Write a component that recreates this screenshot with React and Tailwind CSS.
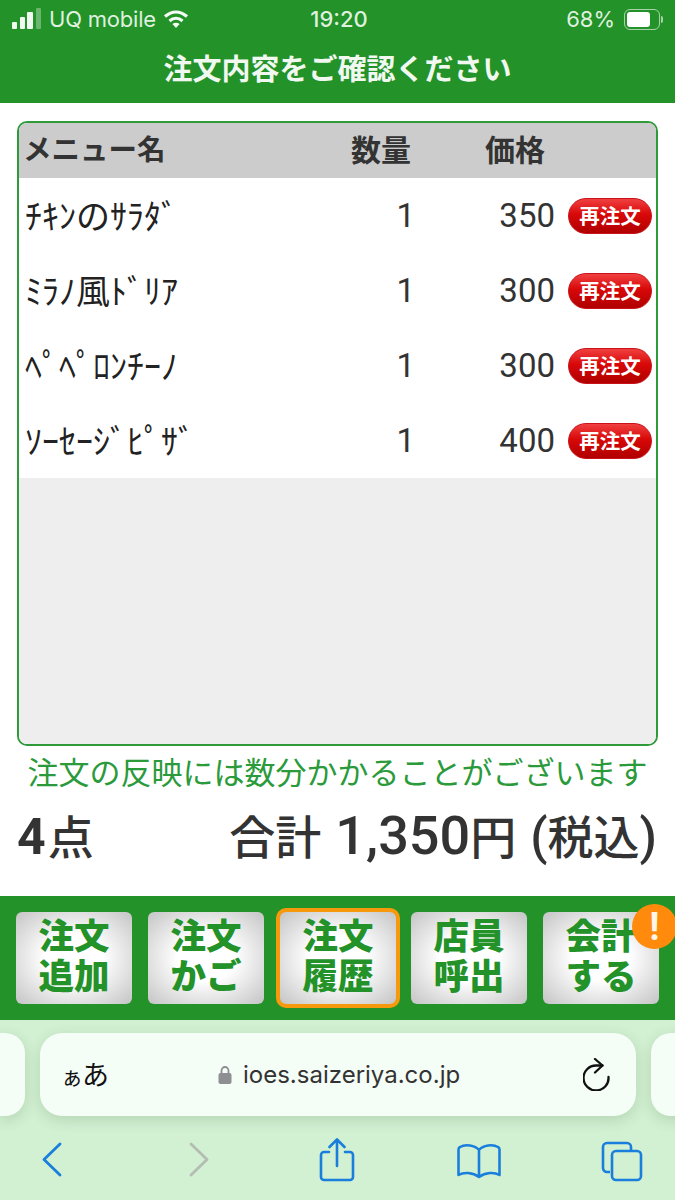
import React from 'react'

const rows = [
  { name: 'ﾁｷﾝのｻﾗﾀﾞ', qty: 1, price: 350 },
  { name: 'ﾐﾗﾉ風ﾄﾞﾘｱ', qty: 1, price: 300 },
  { name: 'ﾍﾟﾍﾟﾛﾝﾁｰﾉ', qty: 1, price: 300 },
  { name: 'ｿｰｾｰｼﾞﾋﾟｻﾞ', qty: 1, price: 400 },
]

const navButtons = [
  { top: '注文', bottom: '追加' },
  { top: '注文', bottom: 'かご' },
  { top: '注文', bottom: '履歴', active: true },
  { top: '店員', bottom: '呼出' },
  { top: '会計', bottom: 'する', alert: true },
]

const cjk = "font-['Noto_Sans_CJK_JP',sans-serif]"
const roboto = "font-['Roboto',sans-serif]"

const StatusBar = () => (
  <div className="flex h-[37px] items-center justify-between pl-3 pr-[11px] pt-px font-['Inter',sans-serif] text-[22px] text-[#dff0df]">
    <div className="flex w-[200px] items-center">
      <svg width="30" height="24" viewBox="0 0 30 24" fill="#f1f8f1">
        <rect x="0" y="15" width="5" height="7" rx="1" />
        <rect x="8" y="10" width="5" height="12" rx="1" />
        <rect x="15" y="5" width="6" height="17" rx="1" />
        <rect x="24" y="1" width="5" height="21" rx="1" opacity="0.35" />
      </svg>
      <span className="ml-[7px] tracking-[-0.2px]">UQ mobile</span>
      <svg className="ml-[7px]" width="26" height="20" viewBox="0 0 26 20" fill="none" stroke="#f4faf4" strokeWidth="3.2">
        <path d="M2 7.5C9 1.5 17 1.5 24 7.5" />
        <path d="M6.5 12C10.5 8.5 15.5 8.5 19.5 12" />
        <path d="M13 19l-3.6-4c2.2-1.600 5-1.600 7.200 0z" fill="#f4faf4" stroke="none" />
      </svg>
    </div>
    <span className="ml-[2px] font-medium">19:20</span>
    <div className="flex w-[200px] items-center justify-end gap-[9px]">
      <span>68%</span>
      <div className="mr-px flex items-center">
        <div className="flex h-[21px] w-[36px] items-center rounded-[6px] border border-[#a6d3a8] p-[2px]">
          <div className="h-full w-[23px] rounded-[3px] bg-white" />
        </div>
        <div className="ml-px h-[7px] w-[2px] rounded-r-sm bg-[#a6d3a8]" />
      </div>
    </div>
  </div>
)

const OrderRow = ({ row }) => (
  <div className="flex h-[75px] items-center">
    <div className={`${cjk} flex-1 pb-[2px] pl-[6px] text-[34px] leading-[44px] text-[#222]`}>{row.name}</div>
    <div className={`${roboto} w-[62px] text-right text-[33px] text-[#333]`}>{row.qty}</div>
    <div className={`${roboto} ml-[80px] w-[60px] text-right text-[33px] text-[#333]`}>{row.price}</div>
    <button className={`${cjk} ml-[13px] mr-[4px] flex h-[36px] w-[84px] items-center justify-center rounded-full border border-[#c9121a] bg-[linear-gradient(#f04040,#d80808_45%,#b00000)] text-[20.500px] font-bold text-white`}>
      再注文
    </button>
  </div>
)

const NavButton = ({ item }) => (
  <div
    className={`relative flex shrink-0 flex-col items-center justify-center bg-[radial-gradient(ellipse_at_center,#ffffff_35%,#c4c4c4_100%)] pb-[8px] ${cjk} text-[35.500px] leading-[40px] font-black text-[#229229] ${
      item.active ? 'ml-[-4px] mr-[-5px] h-[100px] w-[124px] rounded-[10px] border-[4px] border-[#f7990c]' : 'h-[92px] w-[116px] rounded-[6px]'
    }`}
  >
    <span>{item.top}</span>
    <span>{item.bottom}</span>
    {item.alert && (
      <div className={`${roboto} absolute -right-[18px] -top-[8px] flex h-[45px] w-[45px] items-center justify-center rounded-full bg-[#ff8a0c] text-[38px] leading-none font-bold text-[#fff6e8]`}>
        !
      </div>
    )}
  </div>
)

const SafariBar = () => (
  <div className="flex-1 bg-[#d2f0d2]">
    <div className="flex items-center gap-[15px] pt-[13px]">
      <div className="h-[83px] w-[25px] shrink-0 rounded-r-[20px] bg-[#f5fdf7] shadow-[0_4px_14px_rgba(60,110,60,0.2)]" />
      <div className="flex h-[83px] w-[596px] shrink-0 items-center rounded-[22px] bg-[#f5fdf7] pl-[21px] pr-[25px] shadow-[0_4px_14px_rgba(60,110,60,0.2)]">
        <span className={`${cjk} w-[157px] text-[27px] tracking-[-1px] text-[#111]`}>
          <span className="text-[22px]">ぁ</span>あ
        </span>
        <svg width="14" height="20" viewBox="0 0 14 20">
          <path d="M3.5 8V5.500a3.500 3.500 0 0 1 7 0V8" fill="none" stroke="#8d8f93" strokeWidth="1.8" />
          <rect x="0.5" y="8" width="13" height="11" rx="2" fill="#8d8f93" />
        </svg>
        <span className="ml-[11px] flex-1 font-['Inter',sans-serif] text-[24px] text-[#333]">ioes.saizeriya.co.jp</span>
        <svg width="28" height="33" viewBox="0 0 28 33" fill="none" stroke="#111" strokeWidth="2.3" strokeLinecap="round" strokeLinejoin="round">
          <path d="M19.500 7.500H13A12.500 12.500 0 1 0 25.500 19" />
          <path d="M12 1l7.500 6.500L12 14.500" />
        </svg>
      </div>
      <div className="h-[83px] w-[40px] shrink-0 rounded-l-[20px] bg-[#f5fdf7] shadow-[0_4px_14px_rgba(60,110,60,0.2)]" />
    </div>
    <div className="flex items-start pl-[42px] pt-[22px]">
      <svg width="20" height="35" viewBox="0 0 20 35" fill="none" stroke="#1a7fdc" strokeWidth="2.8" strokeLinecap="round" strokeLinejoin="round" className="mt-[4px]">
        <path d="M18 2L2 17.500 18 33" />
      </svg>
      <svg width="20" height="35" viewBox="0 0 20 35" fill="none" stroke="#b3bdb3" strokeWidth="2.8" strokeLinecap="round" strokeLinejoin="round" className="ml-[127px] mt-[4px]">
        <path d="M2 2l16 15.500L2 33" />
      </svg>
      <svg width="36" height="45" viewBox="0 0 36 45" fill="none" stroke="#1a7fdc" strokeWidth="2.6" strokeLinecap="round" strokeLinejoin="round" className="ml-[110px]">
        <path d="M10 14H5a3 3 0 0 0-3 3v22a3 3 0 0 0 3 3h26a3 3 0 0 0 3-3V17a3 3 0 0 0-3-3h-5" />
        <path d="M18 28V2M10.500 9L18 1.500 25.500 9" />
      </svg>
      <svg width="44" height="36" viewBox="0 0 44 36" fill="none" stroke="#1a7fdc" strokeWidth="2.6" strokeLinecap="round" strokeLinejoin="round" className="ml-[102px] mt-[5px]">
        <path d="M22 7C18 2 8 1 3 4c-1 .5-1.500 1-1.500 2.500V32c5-3 14-3 20.500 2 6.500-5 15.500-5 20.500-2V6.500c0-1.500-.5-2-1.500-2.500C36 1 26 2 22 7zM22 7v27" />
      </svg>
      <svg width="42" height="41" viewBox="0 0 42 41" fill="none" stroke="#1a7fdc" strokeWidth="2.600" strokeLinejoin="round" className="ml-[100px] mt-[3px]">
        <path d="M9 31H6a4 4 0 0 1-4-4V6a4 4 0 0 1 4-4h20a4 4 0 0 1 4 4v4" />
        <rect x="11" y="10" width="29" height="29" rx="4" />
      </svg>
    </div>
  </div>
)

const App = () => {
  return (
    <div className="flex h-[1200px] w-[675px] flex-col overflow-hidden bg-white">
      <div className="h-[103px] shrink-0 bg-[#229229]">
        <StatusBar />
        <div className={`${cjk} mt-[10px] text-center text-[29px] leading-[40px] font-bold text-[#f0f8f0]`}>注文内容をご確認ください</div>
      </div>

      <div className="mx-[17px] mt-[18px] flex h-[625px] shrink-0 flex-col overflow-hidden rounded-[10px] border-2 border-[#2f9a3a]">
        <div className={`${cjk} flex h-[55px] shrink-0 items-center bg-[#cccccc] pb-[5px] text-[28.500px] font-bold text-[#333]`}>
          <div className="flex-1 pl-[4px]">メニュー名</div>
          <div className="w-[62px] text-right text-[30px]">数量</div>
          <div className="ml-[72px] w-[62px] text-right text-[30px]">価格</div>
          <div className="w-[111px]" />
        </div>
        <div className="bg-white">
          {rows.map((row) => (
            <OrderRow key={row.name} row={row} />
          ))}
        </div>
        <div className="flex-1 bg-[#eeeeee]" />
      </div>

      <p className={`${cjk} mt-[5px] text-center text-[31px] leading-[40px] text-[#2a9a3a]`}>注文の反映には数分かかることがございます</p>

      <div className={`${cjk} mx-[17px] mt-[4px] flex h-[64px] items-baseline justify-between pr-px text-[46px] font-medium text-[#333]`}>
        <span>
          <span className={`${roboto} text-[50px] font-bold`}>4</span>
          <span className="ml-[2px]">点</span>
        </span>
        <span>
          合計
          <span className={`${roboto} ml-[14px] text-[54px]`}>1,350</span>
          円
          <span className={`${roboto} ml-[14px] text-[50px]`}>(</span>
          税込
          <span className={`${roboto} text-[50px]`}>)</span>
        </span>
      </div>

      <div className="mt-[37px] flex h-[124px] shrink-0 items-center gap-[16px] bg-[#229229] pl-[16px]">
        {navButtons.map((item) => (
          <NavButton key={item.top + item.bottom} item={item} />
        ))}
      </div>

      <SafariBar />
    </div>
  )
}

export default App
